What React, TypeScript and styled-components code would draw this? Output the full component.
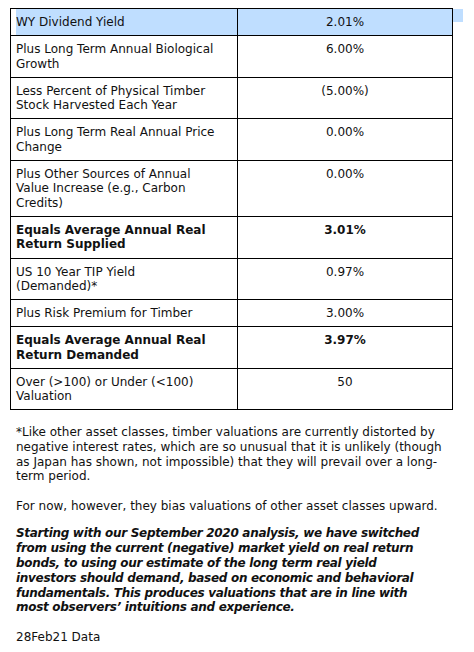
import React from "react";
import styled, { createGlobalStyle } from "styled-components";

const Global = createGlobalStyle`
  html, body { margin: 0; padding: 0; background: #ffffff; }
  body { font-family: Verdana, "DejaVu Sans", sans-serif; color: #111111; }
`;

const Page = styled.div`
  width: 474px;
  height: 652px;
  padding: 8px 0 0 10px;
  box-sizing: border-box;
  font-size: 12px;
`;

const Table = styled.table`
  border-collapse: collapse;
  width: 443px;
  table-layout: fixed;
`;

const Row = styled.tr``;

const LabelCell = styled.td<{ $bold?: boolean }>`
  border: 1px solid #000;
  width: 221px;
  padding: 0 0 0 5px;
  vertical-align: top;
  line-height: 14.5px;
  font-weight: ${(p) => (p.$bold ? 700 : 400)};
  white-space: nowrap;
`;

const LabelInner = styled.div<{ $head?: boolean }>`
  padding: 6px 0 5.6px 0;
  background: ${(p) => (p.$head ? "#bfdeff" : "transparent")};
`;

const ValueCell = styled.td<{ $bold?: boolean; $head?: boolean }>`
  position: relative;
  border: 1px solid #000;
  padding: 6px 0 5.6px;
  text-align: center;
  vertical-align: top;
  line-height: 14.5px;
  font-weight: ${(p) => (p.$bold ? 700 : 400)};
  background: ${(p) => (p.$head ? "#bfdeff" : "transparent")};
`;

const Overhang = styled.span`
  position: absolute;
  right: -11px;
  top: 0;
  width: 10px;
  height: 13px;
  background: #bfdeff;
`;

const Notes = styled.div`
  padding: 15px 0 0 6px;
  display: flex;
  flex-direction: column;
`;

const Para = styled.p<{ $gap?: number; $em?: boolean }>`
  margin: ${(p) => p.$gap ?? 0}px 0 0 0;
  line-height: ${(p) => (p.$em ? "14.8px" : "14.6px")};
  white-space: nowrap;
  font-weight: ${(p) => (p.$em ? 700 : 400)};
  font-style: ${(p) => (p.$em ? "italic" : "normal")};
  letter-spacing: ${(p) => (p.$em ? "-0.3px" : "0")};
`;

type R = { label: string[]; value: string; bold?: boolean; head?: boolean };

const rows: R[] = [
  { label: ["WY Dividend Yield"], value: "2.01%", head: true },
  { label: ["Plus Long Term Annual Biological", "Growth"], value: "6.00%" },
  { label: ["Less Percent of Physical Timber", "Stock Harvested Each Year"], value: "(5.00%)" },
  { label: ["Plus Long Term Real Annual Price", "Change"], value: "0.00%" },
  { label: ["Plus Other Sources of Annual", "Value Increase (e.g., Carbon", "Credits)"], value: "0.00%" },
  { label: ["Equals Average Annual Real", "Return Supplied"], value: "3.01%", bold: true },
  { label: ["US 10 Year TIP Yield", "(Demanded)*"], value: "0.97%" },
  { label: ["Plus Risk Premium for Timber"], value: "3.00%" },
  { label: ["Equals Average Annual Real", "Return Demanded"], value: "3.97%", bold: true },
  { label: ["Over (>100) or Under (<100)", "Valuation"], value: "50" },
];

const lines = (arr: string[]) =>
  arr.map((l, i) => (
    <React.Fragment key={i}>
      {i > 0 && <br />}
      {l}
    </React.Fragment>
  ));

export default function App() {
  return (
    <>
      <Global />
      <Page>
        <Table>
          <tbody>
            {rows.map((r, i) => (
              <Row key={i}>
                <LabelCell $bold={r.bold}>
                  <LabelInner $head={r.head}>{lines(r.label)}</LabelInner>
                </LabelCell>
                <ValueCell $bold={r.bold} $head={r.head}>
                  {r.value}
                  {r.head && <Overhang />}
                </ValueCell>
              </Row>
            ))}
          </tbody>
        </Table>
        <Notes>
          <Para>
            {lines([
              "*Like other asset classes, timber valuations are currently distorted by",
              "negative interest rates, which are so unusual that it is unlikely (though",
              "as Japan has shown, not impossible) that they will prevail over a long-",
              "term period.",
            ])}
          </Para>
          <Para $gap={15}>For now, however, they bias valuations of other asset classes upward.</Para>
          <Para $gap={13} $em>
            {lines([
              "Starting with our September 2020 analysis, we have switched",
              "from using the current (negative) market yield on real return",
              "bonds, to using our estimate of the long term real yield",
              "investors should demand, based on economic and behavioral",
              "fundamentals. This produces valuations that are in line with",
              "most observers\u2019 intuitions and experience.",
            ])}
          </Para>
          <Para $gap={15}>28Feb21 Data</Para>
        </Notes>
      </Page>
    </>
  );
}
